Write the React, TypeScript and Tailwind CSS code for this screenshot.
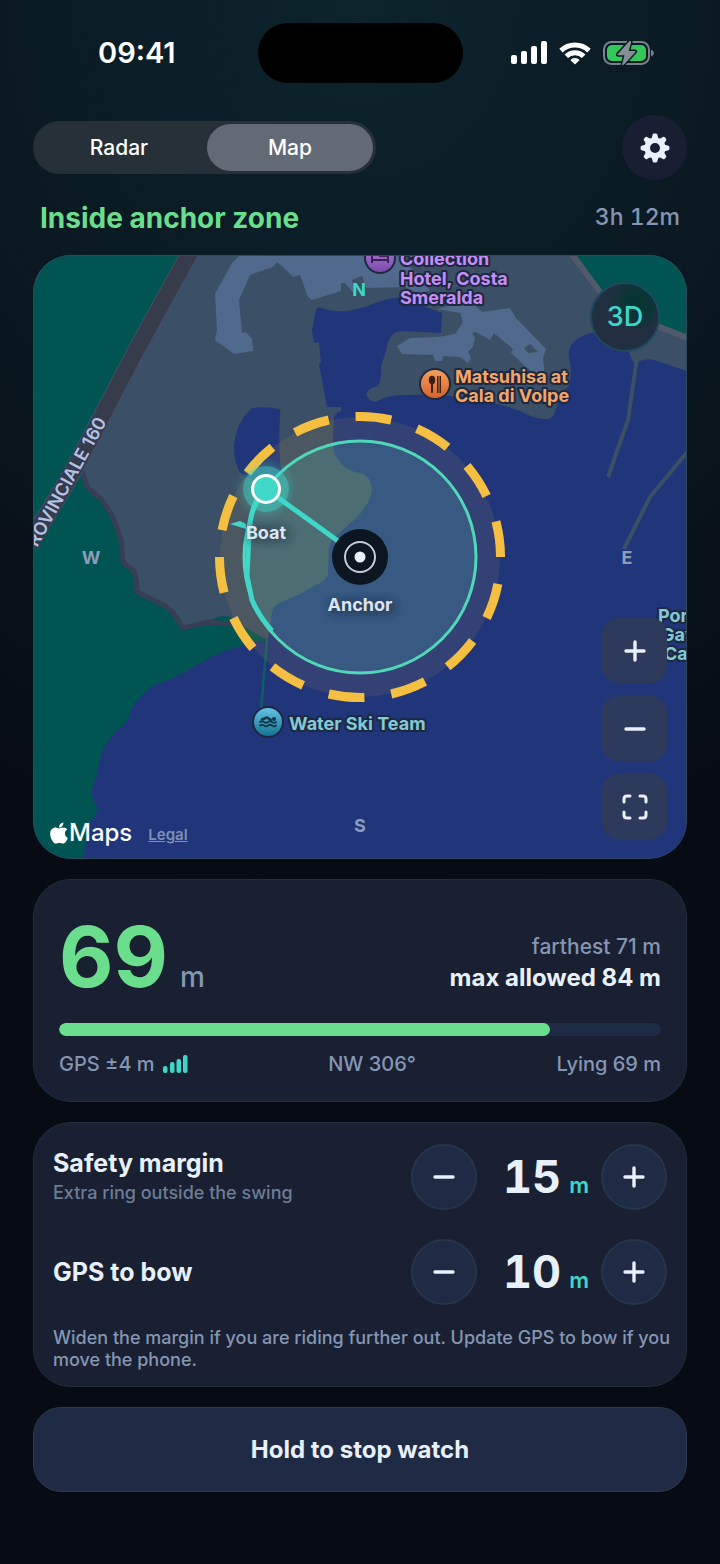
import { useState } from "react";
import { FaApple } from "react-icons/fa";

const GEAR_TEETH = [0, 45, 90, 135, 180, 225, 270, 315];

const GearIcon = () => (
  <svg viewBox="0 0 30 30" className="w-[30px] h-[30px]" aria-hidden="true">
    <g fill="#e8f0fa">
      {GEAR_TEETH.map((angle) => (
        <path
          key={angle}
          d="M11.500 6 L12.700 1.6 Q13 .6 14 .6 H16 Q17 .6 17.3 1.6 L18.500 6Z"
          transform={`rotate(${angle} 15 15)`}
        />
      ))}
    </g>
    <circle cx="15" cy="15" r="7.8" fill="none" stroke="#e8f0fa" strokeWidth="5.600" />
  </svg>
);

const StatusIcons = () => (
  <div className="flex items-center gap-3" aria-hidden="true">
    <svg viewBox="0 0 36 24" className="w-9 h-6" fill="#fff">
      <rect x="0" y="14" width="6" height="9" rx="2" />
      <rect x="10" y="10" width="6" height="13" rx="2" />
      <rect x="20" y="5" width="6" height="18" rx="2" />
      <rect x="30" y="0" width="6" height="23" rx="2" />
    </svg>
    <svg viewBox="0 0 32 24" className="w-8 h-6">
      <g fill="none" stroke="#fff" strokeWidth="5">
        <path d="M2 9.6 A20 20 0 0 1 30 9.600" />
        <path d="M7.3 15.200 A12.4 12.4 0 0 1 24.7 15.200" />
      </g>
      <path d="M16 23.6 L11.3 18.9 A6.8 6.8 0 0 1 20.7 18.900Z" fill="#fff" />
    </svg>
    <svg viewBox="0 0 51 26" className="w-[51px] h-[26px]">
      <rect x="1" y="2" width="45" height="22" rx="7.5" fill="none" stroke="#77828a" strokeWidth="2" />
      <path d="M48 9.5 Q51 11 51 13 Q51 15 48 16.500Z" fill="#77828a" />
      <rect x="4" y="5" width="39" height="16" rx="5" fill="#34c759" />
      <path
        d="M26.500 1 L14.500 14.200 Q14 15.200 15.300 15.200 H21.500 L19 25 Q20.500 25.200 21.500 24 L32.500 12 Q33 11 31.700 11 H25.700 L28.200 2 Q28 .5 26.500 1Z"
        fill="#858f96"
        stroke="#0c1d26"
        strokeWidth="3"
        paintOrder="stroke"
      />
    </svg>
  </div>
);

const PlusIcon = ({ className }: { className?: string }) => (
  <svg viewBox="0 0 22 22" className={className} stroke="#e8f0fa" strokeWidth="3.400" strokeLinecap="round" aria-hidden="true">
    <path d="M11 2 V20 M2 11 H20" />
  </svg>
);

const MinusIcon = ({ className }: { className?: string }) => (
  <svg viewBox="0 0 22 22" className={className} stroke="#e8f0fa" strokeWidth="3.400" strokeLinecap="round" aria-hidden="true">
    <path d="M2 11 H20" />
  </svg>
);

const FrameIcon = () => (
  <svg viewBox="0 0 26 26" className="w-[26px] h-[26px]" fill="none" stroke="#e8f0fa" strokeWidth="3" strokeLinecap="round" aria-hidden="true">
    <path d="M2 8 V5 Q2 2 5 2 H8 M18 2 H21 Q24 2 24 5 V8 M24 18 V21 Q24 24 21 24 H18 M8 24 H5 Q2 24 2 21 V18" />
  </svg>
);

const label = {
  fontWeight: 700,
  fontSize: 18,
  stroke: "#1d2940",
  strokeWidth: 4,
  strokeLinejoin: "round" as const,
  paintOrder: "stroke",
};

const MapCanvas = () => (
  <svg
    viewBox="33 255 654 604"
    preserveAspectRatio="xMidYMid slice"
    className="block w-full h-full"
    role="img"
    aria-label="Map of the anchorage"
  >
    <defs>
      <linearGradient id="hotel" x1="0" y1="0" x2="0" y2="1">
        <stop offset="0" stopColor="#b27be0" />
        <stop offset="1" stopColor="#7a4aa8" />
      </linearGradient>
      <linearGradient id="food" x1="0" y1="0" x2="0" y2="1">
        <stop offset="0" stopColor="#f7a05c" />
        <stop offset="1" stopColor="#d4602c" />
      </linearGradient>
      <linearGradient id="swim" x1="0" y1="0" x2="0" y2="1">
        <stop offset="0" stopColor="#67c6e8" />
        <stop offset="1" stopColor="#12708f" />
      </linearGradient>
      <filter id="soft" x="-30%" y="-30%" width="160%" height="160%">
        <feGaussianBlur stdDeviation="4" />
      </filter>
    </defs>

    {/* Water and land */}
    <rect x="33" y="255" width="654" height="604" fill="#20357a" />
    <path
      fill="#3b4f66"
      d="M33 255 H687 V371 L660 362 Q650 357 640 361 L636 366 L632 360 L629 352 L600 331 Q586 333 576 340 Q567 347 569 358 Q573 372 569 386 Q560 393 558 402 Q555 418 548 419 Q536 420 520 411 Q495 402 470 398 Q440 394 410 395 Q386 394 376 402 Q368 401 366 394 Q368 388 378 386 Q382 378 381 366 Q386 352 388 342 Q392 331 402 331 L441 333 L442 313 Q420 305 400 297 Q385 299 376 303 Q350 313 335 311 Q326 310 319 307 Q315 309 315 316 L312 330 L314 343 L319 342 L321 362 L319 364 L327 407 L341 407 V411 Q335 413 334 418 Q332 440 334 452 Q340 468 355 472 Q370 473 372 488 Q372 502 356 518 L338 534 Q330 540 329 550 L328 575 Q326 580 316 585 L300 594 L280 603 Q273 606 272 612 L268 640 H33Z"
    />
    <path fill="#20357a" d="M252 408 Q266 406 279 409 Q281 411 280 416 Q278 440 281 470 L270 484 Q250 482 240 472 Q234 462 234 446 Q236 422 252 408Z" />
    <path
      fill="#005452"
      d="M33 255 H182 L81 470 L88 488 L100 498 Q112 510 121 540 L123 560 Q125 566 132 569 Q137 574 137 592 L160 602 Q172 608 178 620 L183 628 L208 622 Q218 614 230 617 Q248 630 268 640 Q240 645 220 653 Q200 662 185 672 Q168 681 154 685 Q138 697 130 711 Q130 718 124 724 Q108 738 103 750 Q98 764 97 776 Q91 788 92 796 L98 810 Q95 817 89 823 Q86 840 83 859 H33Z"
    />
    <path fill="#005452" d="M574 255 H687 V337 L640 320 L602 292Z" />
    <path d="M267 640 L261 710" stroke="#0d5f63" strokeWidth="2.500" />

    {/* Piers and roads */}
    <g fill="none">
      <path d="M637 358 L628 420 L608 477" stroke="#3b4f66" strokeWidth="4" />
      <path d="M689 450 L650 497 L624 549" stroke="#3b4f66" strokeWidth="4" />
      <path d="M571 253 L600 292 Q618 313 650 323 L690 339" stroke="#51596c" strokeWidth="6" />
      <path d="M82 472 L88 488 L100 498 Q112 510 121 540 L123 560 Q125 566 132 569 Q137 574 137 592 L160 603 Q172 609 178 620 L183 628 L208 622 L232 624" stroke="#363f56" strokeWidth="5" />
      <path d="M193 247 L137 349 L81 456 Q60 496 28 544" stroke="#40506b" strokeWidth="18" />
      <path d="M193 247 L137 349 L81 456 Q60 496 28 544" stroke="#373c4b" strokeWidth="16" />
    </g>

    {/* Buildings */}
    <g fill="#50698c">
      <path d="M240 255 L232 263 L215 294 L217 330 L215 340 L234 354 L253 351 L252 339 L246 332 L242 333 L239 300 L250 275 L273 267 L277 262 L284 268 L293 277 L300 275 L308 297 L312 300 L325 296 L341 291 L341 283 L345 283 L354 294 L352 280 L362 276 L366 288 L405 287 L420 294 L430 290 L400 255Z" />
      <path
        fillRule="evenodd"
        d="M437 309 L460 313 L463 322 L455 334 L438 337 L410 338 L397 346 L402 354 L433 355 L435 361 L442 361 L443 356 L460 357 L468 363 L471 358 L468 352 L473 347 L475 338 L472 333 L476 332 L490 340 L494 333 L513 349 L511 353 L525 366 L540 379 L545 380 L543 358 L546 349 L516 318 L510 308 L482 312 L475 305 L452 305Z M524 348 L530 344 L538 352 L528 353Z"
      />
    </g>

    {/* Safety ring and swing circle */}
    <circle cx="360" cy="557" r="140" fill="#f5bf42" fillOpacity="0.09" />
    <circle cx="360" cy="557" r="116" fill="#59dec4" fillOpacity="0.16" stroke="#50d8b8" strokeWidth="3" />
    <circle cx="360" cy="557" r="140.500" fill="none" stroke="#f5bf42" strokeWidth="9" pathLength="882" strokeDasharray="36 27" strokeDashoffset="36" />

    {/* Track and rode */}
    <path d="M258 498 Q250 512 249 534 L247 576 L252 600 Q258 615 272 631" fill="none" stroke="#3fd8c8" strokeWidth="5" strokeLinejoin="round" />
    <path d="M230 524 L240 521 L246 524 V529Z" fill="#3fd8c8" />
    <path d="M266 489 L345 546" stroke="#3fd8c8" strokeWidth="5" />
    <circle cx="266" cy="489" r="26" fill="#3fd8c8" fillOpacity="0.25" filter="url(#soft)" />
    <circle cx="266" cy="489" r="23" fill="#3fd8c8" fillOpacity="0.42" />
    <circle cx="266" cy="489" r="13.500" fill="#3fd8c8" stroke="#fff" strokeWidth="3" />
    <circle cx="360" cy="557" r="28" fill="#0c1620" />
    <circle cx="360" cy="557" r="15" fill="none" stroke="#c3ccd8" strokeWidth="2" />
    <circle cx="360" cy="557" r="5.500" fill="#e8f0fa" />

    {/* Compass letters */}
    <g fontSize="18" fontWeight="700" textAnchor="middle" fill="#8e9dbb">
      <text x="359" y="296" fill="#3fd8c8">N</text>
      <text x="91" y="564">W</text>
      <text x="627" y="564">E</text>
      <text x="360" y="832">S</text>
    </g>

    {/* Markers */}
    <g stroke="#1d2940" strokeWidth="2">
      <circle cx="380" cy="258" r="15" fill="url(#hotel)" />
      <circle cx="435" cy="384" r="15" fill="url(#food)" />
      <circle cx="268" cy="722" r="15" fill="url(#swim)" />
    </g>
    <path d="M372 252 V263 M372 260 H388 M388 263 V256 H379" fill="none" stroke="#3a2352" strokeWidth="2" />
    <g fill="#3a1f14">
      <ellipse cx="432" cy="380" rx="3.200" ry="4.200" />
      <rect x="431" y="382" width="2" height="11" rx="1" />
      <rect x="437" y="376" width="1.500" height="17" />
      <rect x="439.500" y="376" width="1.500" height="17" />
    </g>
    {/* Swimmer over two waves */}
    <g fill="none" stroke="#123a4c" strokeWidth="2" strokeLinecap="round" strokeLinejoin="round">
      <path d="M260 722 Q262 720.500 264 722 T268 722 T272 722 T276 722" />
      <path d="M260 725.500 Q262 724 264 725.500 T268 725.500 T272 725.500 T276 725.500" />
      <path d="M262 719.500 L267 717.500 L271 720" strokeWidth="2.500" />
    </g>
    <circle cx="274" cy="719" r="2" fill="#123a4c" />

    <g {...label} fill="#c58df5">
      <text x="400" y="265">Collection</text>
      <text x="400" y="285">Hotel, Costa</text>
      <text x="400" y="304">Smeralda</text>
    </g>
    <g {...label} fill="#f7a566">
      <text x="455" y="383">Matsuhisa at</text>
      <text x="455" y="402">Cala di Volpe</text>
    </g>
    <g {...label} fill="#84c9d6">
      <text x="289" y="730">Water Ski Team</text>
      <text x="658" y="622">Porto</text>
      <text x="661" y="641">Gavina</text>
      <text x="664" y="660">Cala</text>
    </g>
    <g fill="#1d2940" fillOpacity="0.45" filter="url(#soft)">
      <rect x="246" y="526" width="44" height="16" rx="6" />
      <rect x="328" y="599" width="68" height="16" rx="6" />
    </g>
    <g fontSize="18" fontWeight="700" textAnchor="middle" fill="#dde5ef">
      <text x="266" y="539">Boat</text>
      <text x="360" y="611">Anchor</text>
    </g>

    <text transform="translate(37 548) rotate(-61)" fontSize="18" fontWeight="600" fill="#b5c2e2" stroke="#333b50" strokeWidth="3" paintOrder="stroke">
      ROVINCIALE 160
    </text>
  </svg>
);

const mapButton = "flex items-center justify-center w-[65px] h-[65px] rounded-2xl bg-[#2e3a5c]";

interface StepperProps {
  title: string;
  hint?: string;
  value: number;
  onChange: (value: number) => void;
}

const Stepper = ({ title, hint, value, onChange }: StepperProps) => {
  const round = "flex items-center justify-center w-[66px] h-[66px] rounded-full bg-[#1f2b44] border-2 border-[#27344a]";

  return (
    <div className="flex items-center justify-between">
      <div>
        <h2 className="text-[25px] leading-8 font-bold text-[#e8f0fa]">{title}</h2>
        {hint && <p className="text-[18px] leading-7 font-medium text-[#6d7d95]">{hint}</p>}
      </div>
      <div className="flex items-center">
        <button type="button" aria-label={`Decrease ${title}`} className={round} onClick={() => onChange(value - 1)}>
          <MinusIcon className="w-[22px] h-[22px]" />
        </button>
        <output className="flex items-baseline justify-end gap-2 w-[124px] pr-3 tabular-nums">
          <span className="text-[45px] leading-[56px] font-bold text-[#e8f0fa]">{value}</span>
          <span className="text-[22px] leading-none font-semibold text-[#3fd8c8]">m</span>
        </output>
        <button type="button" aria-label={`Increase ${title}`} className={round} onClick={() => onChange(value + 1)}>
          <PlusIcon className="w-[22px] h-[22px]" />
        </button>
      </div>
    </div>
  );
};

const App = () => {
  const [view, setView] = useState("Map");
  const [margin, setMargin] = useState(15);
  const [bow, setBow] = useState(10);
  const progress = 81.5;

  return (
    <div className="min-h-screen bg-[#070b13] bg-[radial-gradient(ellipse_110%_900px_at_50%_0,#0d242d_0%,#0a1821_50%,#070b13_100%)] bg-no-repeat pb-[72px] font-['Inter',sans-serif] text-[#e8f0fa]">
      {/* Status bar */}
      <div className="grid grid-cols-[1fr_205px_1fr] items-center pt-[23px]">
        <span className="pl-[98px] text-[29px] font-semibold text-white">09:41</span>
        <div className="h-[60px] rounded-full bg-black" />
        <div className="flex justify-end pr-[66px]">
          <StatusIcons />
        </div>
      </div>

      <main className="px-[33px]">
        <header className="mt-8 flex items-center justify-between">
          <div className="grid grid-cols-2 gap-[5px] w-[343px] h-[53px] p-[3px] rounded-full bg-[#253039]">
            {["Radar", "Map"].map((name) => (
              <button
                key={name}
                type="button"
                aria-pressed={view === name}
                onClick={() => setView(name)}
                className={
                  view === name
                    ? "rounded-full bg-[#626a75] text-[21px] font-medium text-white"
                    : "rounded-full text-[21px] font-medium text-white"
                }
              >
                {name}
              </button>
            ))}
          </div>
          <button type="button" aria-label="Settings" className="flex items-center justify-center w-[65px] h-[65px] rounded-full bg-[#181f33]">
            <GearIcon />
          </button>
        </header>

        <div className="flex items-center justify-between h-[75px] px-[7px]">
          <h1 className="text-[28px] font-bold text-[#6ade8c]">Inside anchor zone</h1>
          <span className="text-[23px] font-medium tabular-nums text-[#8596b2]">3h 12m</span>
        </div>

        {/* Map */}
        <section className="relative h-[604px] overflow-hidden rounded-[38px]">
          <MapCanvas />
          <button
            type="button"
            className="absolute top-[27px] right-[27px] w-[70px] h-[70px] rounded-full border-2 border-[#1f4a5e] bg-[#222f40] bg-[radial-gradient(circle_at_70%_28%,#063432_0%,#0b3536_20%,#222f40_45%)] text-[27px] font-medium text-[#3fd8c8]"
          >
            3D
          </button>
          <div className="absolute right-5 bottom-5 flex flex-col gap-[13px]">
            <button type="button" aria-label="Zoom in" className={mapButton}>
              <PlusIcon className="w-[22px] h-[22px]" />
            </button>
            <button type="button" aria-label="Zoom out" className={mapButton}>
              <MinusIcon className="w-[22px] h-[22px]" />
            </button>
            <button type="button" aria-label="Fit to screen" className={mapButton}>
              <FrameIcon />
            </button>
          </div>
          <div className="absolute left-4 bottom-2 flex items-center gap-4">
            <span className="flex items-center text-[24px] font-medium text-white">
              <FaApple className="w-5 h-6" />
              Maps
            </span>
            <a href="#legal" className="pt-1 text-[15px] font-semibold text-[#7f8fb5] underline">Legal</a>
          </div>
          <div className="pointer-events-none absolute inset-0 rounded-[38px] border border-[#2b4a5c]" />
        </section>

        {/* Distance */}
        <section className="mt-5 rounded-[38px] border border-[#232e3e] bg-[#182032] px-[25px] pt-[35px] pb-[21px]">
          <div className="flex items-end justify-between">
            <p className="flex items-baseline gap-3">
              <span className="text-[84px] leading-[84px] font-bold text-[#6ade8c]">69</span>
              <span className="text-[28px] leading-none font-medium text-[#8596b2]">m</span>
            </p>
            <div className="pb-[6px] text-right">
              <p className="text-[21px] leading-[31px] font-medium text-[#8596b2]">farthest 71 m</p>
              <p className="text-2xl leading-[31px] font-bold">max allowed 84 m</p>
            </div>
          </div>
          <div
            role="progressbar"
            aria-label="Distance of maximum"
            aria-valuenow={progress}
            className="mt-6 h-[13px] overflow-hidden rounded-full bg-[#1f2b44]"
          >
            <div className="h-full rounded-full bg-[#6ade8c]" style={{ width: `${progress}%` }} />
          </div>
          <div className="mt-3 flex items-center justify-between text-xl leading-8 font-medium text-[#8596b2]">
            <span className="flex items-center gap-2">
              GPS ±4 m
              <svg viewBox="0 0 25 18" className="w-[25px] h-[18px]" fill="#3fd8c8" aria-hidden="true">
                <rect x="0" y="11" width="4.500" height="7" rx="2" />
                <rect x="7" y="7" width="4.500" height="11" rx="2" />
                <rect x="13.500" y="4" width="4.500" height="14" rx="2" />
                <rect x="20" y="0" width="4.500" height="18" rx="2" />
              </svg>
            </span>
            <span>NW 306°</span>
            <span>Lying 69 m</span>
          </div>
        </section>

        {/* Adjustments */}
        <section className="mt-5 rounded-[38px] border border-[#232e3e] bg-[#182032] px-[19px] pt-[21px] pb-[15px]">
          <Stepper title="Safety margin" hint="Extra ring outside the swing" value={margin} onChange={setMargin} />
          <div className="mt-[29px]">
            <Stepper title="GPS to bow" value={bow} onChange={setBow} />
          </div>
          <p className="mt-[22px] -mr-2 text-[18px] leading-[22px] font-medium text-[#8596b2]">
            Widen the margin if you are riding further out. Update GPS to bow if you move the phone.
          </p>
        </section>

        <button type="button" className="mt-5 w-full h-[85px] rounded-[28px] border border-[#2c394f] bg-[#1f2b44] text-2xl font-bold">
          Hold to stop watch
        </button>
      </main>
    </div>
  );
};

export default App;
